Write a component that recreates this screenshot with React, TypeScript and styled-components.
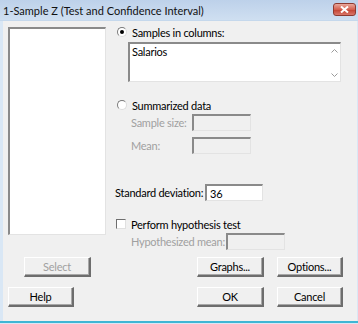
import styled, { createGlobalStyle } from "styled-components";

const GlobalStyle = createGlobalStyle`
  html, body { margin: 0; padding: 0; background: #dbe8f5; }
  body { font-family: Lato, "Open Sans", Arial, sans-serif; }
`;

const Frame = styled.div`
  width: 358px;
  height: 324px;
  background: #d9e7f5;
  display: flex;
  flex-direction: column;
  box-sizing: border-box;
`;

const TitleBar = styled.div`
  height: 20px;
  flex-shrink: 0;
  display: flex;
  align-items: center;
  justify-content: space-between;
  padding: 0 2px 0 3px;
  background: linear-gradient(#bdd1ea, #cfdff1);
  border-bottom: 1px solid #c5d8ec;
`;

const Title = styled.span`
  font-size: 11px;
  color: #111;
`;

const CloseBtn = styled.div`
  width: 23px;
  height: 13px;
  margin-top: -2px;
  border: 1px solid #8e3a30;
  border-radius: 3px;
  background: linear-gradient(#e9a89c, #d4604f 50%, #c2402f 51%, #d9776a);
  display: flex;
  align-items: center;
  justify-content: center;
  box-sizing: border-box;
`;

const Content = styled.div`
  flex: 1;
  margin: 0 1px 0 3px;
  background: #f0f0f0;
  display: flex;
  flex-direction: column;
  font-size: 11px;
  letter-spacing: -0.25px;
  color: #000;
`;

const BottomEdge = styled.div`
  height: 2px;
  margin-bottom: 1px;
  background: #3fb6d4;
  flex-shrink: 0;
`;

const MainArea = styled.div`
  display: flex;
  align-items: flex-start;
`;

const ListBox = styled.div`
  width: 98px;
  height: 208px;
  margin: 6px 0 0 5px;
  background: #fff;
  box-sizing: border-box;
  border-top: 2px solid #8a8a8a;
  border-left: 2px solid #8a8a8a;
  border-right: 1px solid #e3e3e3;
  border-bottom: 1px solid #e3e3e3;
`;

const RightPanel = styled.div`
  margin: 4px 0 0 9px;
  display: flex;
  flex-direction: column;
  flex: 1;
`;

const Row = styled.div<{ $top: number }>`
  display: flex;
  align-items: center;
  height: 14px;
  margin-top: ${(p) => p.$top}px;
`;

const FieldRow = styled.div<{ $top: number; $indent: number }>`
  display: flex;
  align-items: center;
  height: 17px;
  margin-top: ${(p) => p.$top}px;
  padding-left: ${(p) => p.$indent}px;
`;

const Label = styled.span<{ $disabled?: boolean; $width?: number }>`
  color: ${(p) => (p.$disabled ? "#a0a0a0" : "#000")};
  width: ${(p) => (p.$width ? `${p.$width}px` : "auto")};
  flex-shrink: 0;
  white-space: nowrap;
`;

const RadioMark = styled.span<{ $checked?: boolean }>`
  width: 10px;
  height: 10px;
  border-radius: 50%;
  background: #fff;
  box-sizing: border-box;
  border: 1px solid #7a7a7a;
  border-right-color: #dcdcdc;
  border-bottom-color: #dcdcdc;
  margin: 0 5px 0 2px;
  display: flex;
  align-items: center;
  justify-content: center;
  &::after {
    content: "";
    width: 4px;
    height: 4px;
    border-radius: 50%;
    background: ${(p) => (p.$checked ? "#000" : "transparent")};
  }
`;

const CheckMark = styled.span`
  width: 10px;
  height: 10px;
  background: #fff;
  box-sizing: border-box;
  border-top: 1px solid #6e6e6e;
  border-left: 1px solid #6e6e6e;
  border-right: 1px solid #e0e0e0;
  border-bottom: 1px solid #e0e0e0;
  margin: 0 5px 0 1px;
`;

const ColumnsBox = styled.div`
  width: 213px;
  height: 40px;
  margin: 3px 0 0 13px;
  background: #fff;
  box-sizing: border-box;
  border-top: 2px solid #8a8a8a;
  border-left: 2px solid #8a8a8a;
  border-right: 1px solid #e3e3e3;
  border-bottom: 1px solid #e3e3e3;
  display: flex;
  justify-content: space-between;
  padding: 1px 0 0 2px;
`;

const Scroll = styled.div`
  width: 12px;
  display: flex;
  flex-direction: column;
  justify-content: space-between;
  align-items: center;
  padding: 4px 0 4px;
`;

const Input = styled.div<{ $width: number; $enabled?: boolean }>`
  width: ${(p) => p.$width}px;
  height: 17px;
  box-sizing: border-box;
  background: ${(p) => (p.$enabled ? "#fff" : "#f0f0f0")};
  border-top: 2px solid #8a8a8a;
  border-left: 2px solid #8a8a8a;
  border-right: 1px solid #e3e3e3;
  border-bottom: 1px solid #e3e3e3;
  padding-left: 3px;
  display: flex;
  align-items: center;
  flex-shrink: 0;
`;

const ButtonRow = styled.div<{ $top: number; $left: number }>`
  display: flex;
  justify-content: space-between;
  margin-top: ${(p) => p.$top}px;
  padding: 0 14px 0 ${(p) => p.$left}px;
`;

const ButtonGroup = styled.div`
  display: flex;
  gap: 13px;
`;

const Button = styled.div<{ $width: number; $disabled?: boolean }>`
  width: ${(p) => p.$width}px;
  height: 20px;
  box-sizing: border-box;
  background: #f0f0f0;
  border-top: 1px solid #fff;
  border-left: 1px solid #fff;
  border-right: 2px solid #6d6d6d;
  border-bottom: 2px solid #6d6d6d;
  box-shadow: inset -1px -1px 0 #a8a8a8;
  display: flex;
  align-items: center;
  justify-content: center;
  color: ${(p) => (p.$disabled ? "#a0a0a0" : "#000")};
`;

function Chevron({ up }: { up?: boolean }) {
  return (
    <svg width="7" height="4" viewBox="0 0 7 4">
      <path d={up ? "M0.5 3.5 L3.5 0.5 L6.5 3.5" : "M0.5 0.5 L3.5 3.5 L6.5 0.5"} fill="none" stroke="#9a9a9a" strokeWidth="1" />
    </svg>
  );
}

export default function App() {
  return (
    <>
      <GlobalStyle />
      <Frame>
        <TitleBar>
          <Title>1-Sample Z (Test and Confidence Interval)</Title>
          <CloseBtn>
            <svg width="9" height="7" viewBox="0 0 9 7">
              <path d="M1 0.5 L8 6.5 M8 0.5 L1 6.5" stroke="#fff" strokeWidth="2" />
            </svg>
          </CloseBtn>
        </TitleBar>
        <Content>
          <MainArea>
            <ListBox />
            <RightPanel>
              <Row $top={0}>
                <RadioMark $checked />
                <Label>Samples in columns:</Label>
              </Row>
              <ColumnsBox>
                <span>Salarios</span>
                <Scroll>
                  <Chevron up />
                  <Chevron />
                </Scroll>
              </ColumnsBox>
              <Row $top={16}>
                <RadioMark />
                <Label>Summarized data</Label>
              </Row>
              <FieldRow $top={2} $indent={16}>
                <Label $disabled $width={61}>Sample size:</Label>
                <Input $width={59} />
              </FieldRow>
              <FieldRow $top={6} $indent={16}>
                <Label $disabled $width={61}>Mean:</Label>
                <Input $width={59} />
              </FieldRow>
              <FieldRow $top={30} $indent={0}>
                <Label $width={90}>Standard deviation:</Label>
                <Input $width={58} $enabled>36</Input>
              </FieldRow>
              <Row $top={16}>
                <CheckMark />
                <Label>Perform hypothesis test</Label>
              </Row>
              <FieldRow $top={2} $indent={16}>
                <Label $disabled $width={95}>Hypothesized mean:</Label>
                <Input $width={59} />
              </FieldRow>
            </RightPanel>
          </MainArea>
          <ButtonRow $top={7} $left={21}>
            <Button $width={67} $disabled>Select</Button>
            <ButtonGroup>
              <Button $width={67}>Graphs...</Button>
              <Button $width={66}>Options...</Button>
            </ButtonGroup>
          </ButtonRow>
          <ButtonRow $top={10} $left={5}>
            <Button $width={66}>Help</Button>
            <ButtonGroup>
              <Button $width={67}>OK</Button>
              <Button $width={66}>Cancel</Button>
            </ButtonGroup>
          </ButtonRow>
        </Content>
        <BottomEdge />
      </Frame>
    </>
  );
}
